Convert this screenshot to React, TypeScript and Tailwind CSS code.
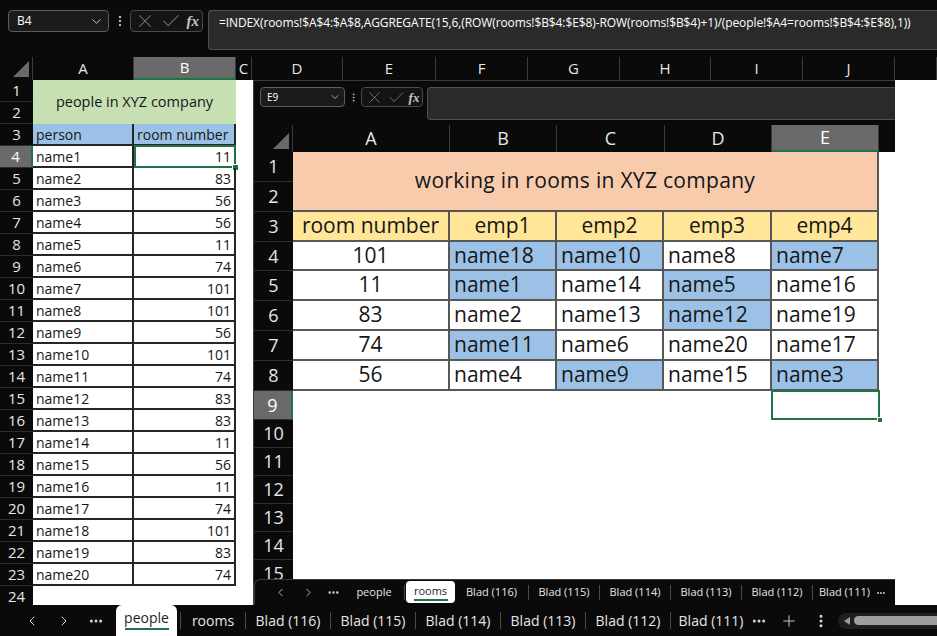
import React from 'react';
import { ChevronDown, ChevronLeft, ChevronRight, X, Check, Ellipsis, EllipsisVertical, Plus } from 'lucide-react';

const mainCols = [
  { l: 'A', c: 'w-[101px]' },
  { l: 'B', c: 'w-[102px]', sel: true },
  { l: 'C', c: 'w-[16px]' },
  { l: 'D', c: 'w-[91px]' },
  { l: 'E', c: 'w-[93px]' },
  { l: 'F', c: 'w-[92px]' },
  { l: 'G', c: 'w-[92px]' },
  { l: 'H', c: 'w-[91px]' },
  { l: 'I', c: 'w-[92px]' },
  { l: 'J', c: 'w-[92px]' },
  { l: '', c: 'w-[42px]' },
];

const people: [string, number][] = [
  ['name1', 11], ['name2', 83], ['name3', 56], ['name4', 56], ['name5', 11],
  ['name6', 74], ['name7', 101], ['name8', 101], ['name9', 56], ['name10', 101],
  ['name11', 74], ['name12', 83], ['name13', 83], ['name14', 11], ['name15', 56],
  ['name16', 11], ['name17', 74], ['name18', 101], ['name19', 83], ['name20', 74],
];

const rooms: { n: string; h: string; e: [string, boolean][] }[] = [
  { n: '101', h: 'h-[29px]', e: [['name18', true], ['name10', true], ['name8', false], ['name7', true]] },
  { n: '11', h: 'h-[30px]', e: [['name1', true], ['name14', false], ['name5', true], ['name16', false]] },
  { n: '83', h: 'h-[30px]', e: [['name2', false], ['name13', false], ['name12', true], ['name19', false]] },
  { n: '74', h: 'h-[30px]', e: [['name11', true], ['name6', false], ['name20', false], ['name17', false]] },
  { n: '56', h: 'h-[30px]', e: [['name4', false], ['name9', true], ['name15', false], ['name3', true]] },
];

const empW = ['w-[107px]', 'w-[107px]', 'w-[108px]', 'w-[107px]'];

const overlayRowH = [
  'h-[30px]', 'h-[30px]', 'h-[30px]', 'h-[29px]', 'h-[30px]', 'h-[30px]', 'h-[30px]', 'h-[30px]',
  'h-[29px]', 'h-[28px]', 'h-[28px]', 'h-[28px]', 'h-[28px]', 'h-[28px]', 'h-[28px]',
];

const overlayCols = [
  { l: 'A', c: 'w-[157px]' },
  { l: 'B', c: 'w-[107px]' },
  { l: 'C', c: 'w-[108px]' },
  { l: 'D', c: 'w-[107px]' },
  { l: 'E', c: 'w-[107px]', sel: true },
];

const CELLFONT = "font-['Open_Sans',sans-serif]";

function Corner({ cls }: { cls: string }) {
  return (
    <div className={`${cls} shrink-0 relative border-r border-[#3a3a3a]`}>
      <svg className="absolute right-[3px] bottom-[3px]" width="16" height="16" viewBox="0 0 16 16">
        <polygon points="16,0 16,16 0,16" fill="#6a6a6a" />
      </svg>
    </div>
  );
}

function FxBox({ cls, size, fx }: { cls: string; size: number; fx: string }) {
  return (
    <div className={`${cls} shrink-0 rounded-[4px] border border-[#4a4a4a] bg-[#141414] flex items-center justify-around px-[1px]`}>
      <X size={size} strokeWidth={1.1} color="#7a7a7a" />
      <Check size={size} strokeWidth={1.1} color="#7a7a7a" />
      <span className={`${fx} font-['Liberation_Serif',serif] italic font-bold text-[#c8c8c8] leading-none`}>fx</span>
    </div>
  );
}

export default function App() {
  return (
    <div className="relative w-[937px] h-[636px] overflow-hidden bg-[#0a0a0a] font-['Open_Sans',sans-serif]">
      {/* formula bar */}
      <div className="h-[57px] flex items-start pt-[10px] pl-[8px]">
        <div className="w-[101px] shrink-0 h-[22px] rounded-[4px] border border-[#5c5c5c] bg-[#1b1b1b] flex items-center justify-between pl-[8px] pr-[4px] text-[12px] text-white">
          <span>B4</span>
          <ChevronDown size={15} strokeWidth={1.5} color="#d0d0d0" />
        </div>
        <div className="w-[21px] shrink-0 h-[22px] flex items-center justify-center">
          <EllipsisVertical size={14} strokeWidth={2} color="#bdbdbd" />
        </div>
        <FxBox cls="w-[73px] h-[22px]" size={22} fx="text-[15px]" />
        <div className="ml-[5px] flex-1 h-[40px] rounded-l-[4px] border border-r-0 border-[#505050] bg-[#2a2a2a] pl-[10px] pt-[3px] text-[12px] tracking-[-0.1px] text-white whitespace-nowrap overflow-hidden">
          =INDEX(rooms!$A$4:$A$8,AGGREGATE(15,6,(ROW(rooms!$B$4:$E$8)-ROW(rooms!$B$4)+1)/(people!$A4=rooms!$B$4:$E$8),1))
        </div>
      </div>

      {/* column headers */}
      <div className="h-[23px] flex">
        <Corner cls="w-[33px] h-[23px]" />
        {mainCols.map((c, i) => (
          <div
            key={i}
            className={`${c.c} shrink-0 h-[23px] flex items-center justify-center border-r border-[#3a3a3a] text-[15px] ${c.sel ? 'bg-[#6a6a6a] text-white border-b-2 border-b-[#217346]' : 'text-[#e6e6e6]'}`}
          >
            {c.l}
          </div>
        ))}
      </div>

      {/* sheet body */}
      <div className="h-[525px] flex overflow-hidden">
        <div className="w-[33px] shrink-0 flex flex-col">
          {Array.from({ length: 24 }, (_, i) => (
            <div
              key={i}
              className={`h-[22px] shrink-0 flex items-center justify-center border-b border-[#2c2c2c] text-[15px] ${i === 3 ? 'bg-[#6a6a6a] text-white border-r-2 border-r-[#217346]' : 'text-[#e6e6e6]'}`}
            >
              {i + 1}
            </div>
          ))}
        </div>
        <div className={`flex-1 bg-white ${CELLFONT} text-[#161616]`}>
          <div className="w-[203px] flex flex-col text-[14px] whitespace-nowrap">
            <div className="h-[44px] bg-[#c6e0b4] flex items-center justify-center text-[14.5px]">people in XYZ company</div>
            <div className="h-[22px] flex bg-[#9bc2e6]">
              <div className="w-[101px] border-r-2 border-b-2 border-[#262626] pl-[3px] flex items-center">person</div>
              <div className="w-[102px] border-r-2 border-b-2 border-[#262626] pl-[3px] flex items-center">room number</div>
            </div>
            {people.map(([n, r], i) => (
              <div key={n} className="h-[22px] flex">
                <div className="w-[101px] border-r-2 border-b-2 border-[#262626] pl-[3px] flex items-center">{n}</div>
                <div className="relative w-[102px] border-r-2 border-b-2 border-[#262626] pr-[3px] flex items-center justify-end">
                  {r}
                  {i === 0 && (
                    <>
                      <div className="absolute left-0 -top-[1px] -right-[2px] -bottom-[2px] border-2 border-[#217346]" />
                      <div className="absolute -right-[5px] -bottom-[5px] w-[7px] h-[7px] bg-[#217346] border border-white" />
                    </>
                  )}
                </div>
              </div>
            ))}
          </div>
        </div>
      </div>

      {/* bottom sheet tab bar */}
      <div className="h-[31px] flex items-stretch text-[14px] text-[#e6e6e6]">
        <div className="w-[16px]" />
        <div className="w-[32px] flex items-center justify-center"><ChevronLeft size={16} strokeWidth={1.5} color="#d8d8d8" /></div>
        <div className="w-[32px] flex items-center justify-center"><ChevronRight size={16} strokeWidth={1.5} color="#d8d8d8" /></div>
        <div className="w-[31px] flex items-center justify-center"><Ellipsis size={16} strokeWidth={2.5} color="#d8d8d8" /></div>
        <div className="ml-[5px] w-[61px] bg-white rounded-t-[6px] flex flex-col items-center justify-center pb-[2px]">
          <span className="text-[#1e1e1e] leading-[18px]">people</span>
          <div className="w-[44px] h-[2px] bg-[#217346] mt-[1px]" />
        </div>
        <div className="ml-[3px] self-center w-px h-[17px] bg-[#4a4a4a]" />
        <div className="w-[64px] flex items-center justify-center">rooms</div>
        {['Blad (116)', 'Blad (115)', 'Blad (114)', 'Blad (113)', 'Blad (112)'].map((t) => (
          <React.Fragment key={t}>
            <div className="self-center w-px h-[17px] bg-[#4a4a4a]" />
            <div className="w-[84px] flex items-center justify-center whitespace-nowrap">{t}</div>
          </React.Fragment>
        ))}
        <div className="self-center w-px h-[17px] bg-[#4a4a4a]" />
        <div className="w-[80px] flex items-center justify-center whitespace-nowrap">Blad (111)</div>
        <div className="w-[16px] flex items-center justify-center"><Ellipsis size={16} strokeWidth={2.5} color="#d8d8d8" /></div>
        <div className="ml-[8px] w-[28px] flex items-center justify-center"><Plus size={18} strokeWidth={1.2} color="#d8d8d8" /></div>
        <div className="ml-[4px] w-[28px] flex items-center justify-center"><EllipsisVertical size={16} strokeWidth={2.5} color="#d8d8d8" /></div>
        <div className="ml-[3px] flex-1 self-center h-[16px] rounded-l-full bg-[#1e1e1e] flex items-center pl-[6px]">
          <svg width="6" height="8" viewBox="0 0 6 8"><polygon points="6,0 6,8 0,4" fill="#9a9a9a" /></svg>
          <div className="ml-[4px] flex-1 h-[9px] rounded-l-full bg-[#9e9e9e]" />
        </div>
      </div>

      {/* overlay window (rooms) */}
      <div className="absolute left-[253px] top-[80px] w-[642px] h-[525px] bg-[#0a0a0a] border-t border-l border-[#3a3a3a] flex flex-col overflow-hidden">
        <div className="h-[44px] shrink-0 flex items-start pt-[6px] pl-[6px]">
          <div className="w-[85px] shrink-0 h-[20px] rounded-[4px] border border-[#5c5c5c] bg-[#1b1b1b] flex items-center justify-between pl-[6px] pr-[3px] text-[10px] text-white">
            <span>E9</span>
            <ChevronDown size={12} strokeWidth={1.5} color="#d0d0d0" />
          </div>
          <div className="w-[16px] shrink-0 h-[20px] flex items-center justify-center">
            <EllipsisVertical size={11} strokeWidth={2} color="#bdbdbd" />
          </div>
          <FxBox cls="w-[62px] h-[20px]" size={19} fx="text-[13px]" />
          <div className="ml-[4px] flex-1 h-[33px] rounded-l-[4px] border border-r-0 border-[#505050] bg-[#2a2a2a]" />
        </div>
        <div className="h-[27px] shrink-0 flex">
          <Corner cls="w-[39px] h-[27px]" />
          {overlayCols.map((c) => (
            <div
              key={c.l}
              className={`${c.c} shrink-0 h-[27px] flex items-center justify-center border-r border-[#3a3a3a] text-[18px] ${c.sel ? 'bg-[#6a6a6a] text-white border-b-2 border-b-[#217346]' : 'text-[#e6e6e6]'}`}
            >
              {c.l}
            </div>
          ))}
        </div>
        <div className="flex-1 flex overflow-hidden">
          <div className="w-[39px] shrink-0 flex flex-col">
            {overlayRowH.map((h, i) => (
              <div
                key={i}
                className={`${h} shrink-0 flex items-center justify-center border-b border-[#2c2c2c] text-[18px] ${i === 8 ? 'bg-[#6a6a6a] text-white border-r-2 border-r-[#217346]' : 'text-[#e6e6e6]'}`}
              >
                {i + 1}
              </div>
            ))}
          </div>
          <div className={`flex-1 bg-white ${CELLFONT} text-[#161616] text-[21px] whitespace-nowrap`}>
            <div className="w-[586px] flex flex-col">
              <div className="h-[60px] bg-[#f8cbad] border-r-2 border-b-2 border-[#575757] flex items-center justify-center tracking-[0.3px]">
                working in rooms in XYZ company
              </div>
              <div className="h-[30px] flex bg-[#ffe699]">
                <div className="w-[157px] border-r-2 border-b-2 border-[#575757] flex items-center justify-center">room number</div>
                {['emp1', 'emp2', 'emp3', 'emp4'].map((e, j) => (
                  <div key={e} className={`${empW[j]} border-r-2 border-b-2 border-[#575757] flex items-center justify-center`}>{e}</div>
                ))}
              </div>
              {rooms.map((r) => (
                <div key={r.n} className={`${r.h} flex`}>
                  <div className="w-[157px] border-r-2 border-b-2 border-[#575757] flex items-center justify-center">{r.n}</div>
                  {r.e.map(([n, b], j) => (
                    <div
                      key={n}
                      className={`${empW[j]} border-r-2 border-b-2 border-[#575757] flex items-center pl-[4px] ${b ? 'bg-[#9bc2e6]' : ''}`}
                    >
                      {n}
                    </div>
                  ))}
                </div>
              ))}
              <div className="h-[29px] flex">
                <div className="w-[479px]" />
                <div className="relative w-[107px]">
                  <div className="absolute -left-[1px] -top-[1px] right-[-1px] bottom-0 border-2 border-[#217346]" />
                  <div className="absolute -right-[4px] -bottom-[3px] w-[6px] h-[6px] bg-[#217346] border border-white" />
                </div>
              </div>
            </div>
          </div>
        </div>
        <div className="h-[26px] shrink-0 rounded-tl-[6px] border-t border-l border-[#3a3a3a] bg-[#0a0a0a] flex items-stretch text-[11px] text-[#e6e6e6]">
          <div className="w-[11px]" />
          <div className="w-[28px] flex items-center justify-center"><ChevronLeft size={13} strokeWidth={1.5} color="#d8d8d8" /></div>
          <div className="w-[28px] flex items-center justify-center"><ChevronRight size={13} strokeWidth={1.5} color="#d8d8d8" /></div>
          <div className="w-[22px] flex items-center justify-center"><Ellipsis size={13} strokeWidth={2.5} color="#d8d8d8" /></div>
          <div className="w-[60px] flex items-center justify-center">people</div>
          <div className="self-center w-px h-[15px] bg-[#4a4a4a]" />
          <div className="ml-[1px] mt-[1px] mb-[2px] w-[49px] bg-white rounded-[4px] flex flex-col items-center justify-center">
            <span className="text-[#1e1e1e] leading-[14px]">rooms</span>
            <div className="w-[34px] h-[2px] bg-[#217346] mt-[1px]" />
          </div>
          <div className="w-[73px] flex items-center justify-center whitespace-nowrap">Blad (116)</div>
          {['Blad (115)', 'Blad (114)', 'Blad (113)', 'Blad (112)'].map((t) => (
            <React.Fragment key={t}>
              <div className="self-center w-px h-[15px] bg-[#4a4a4a]" />
              <div className="w-[70px] flex items-center justify-center whitespace-nowrap">{t}</div>
            </React.Fragment>
          ))}
          <div className="self-center w-px h-[15px] bg-[#4a4a4a]" />
          <div className="w-[63px] flex items-center justify-center whitespace-nowrap">Blad (111)</div>
          <div className="w-[10px] flex items-center justify-center"><Ellipsis size={12} strokeWidth={2.5} color="#d8d8d8" /></div>
        </div>
      </div>
    </div>
  );
}
